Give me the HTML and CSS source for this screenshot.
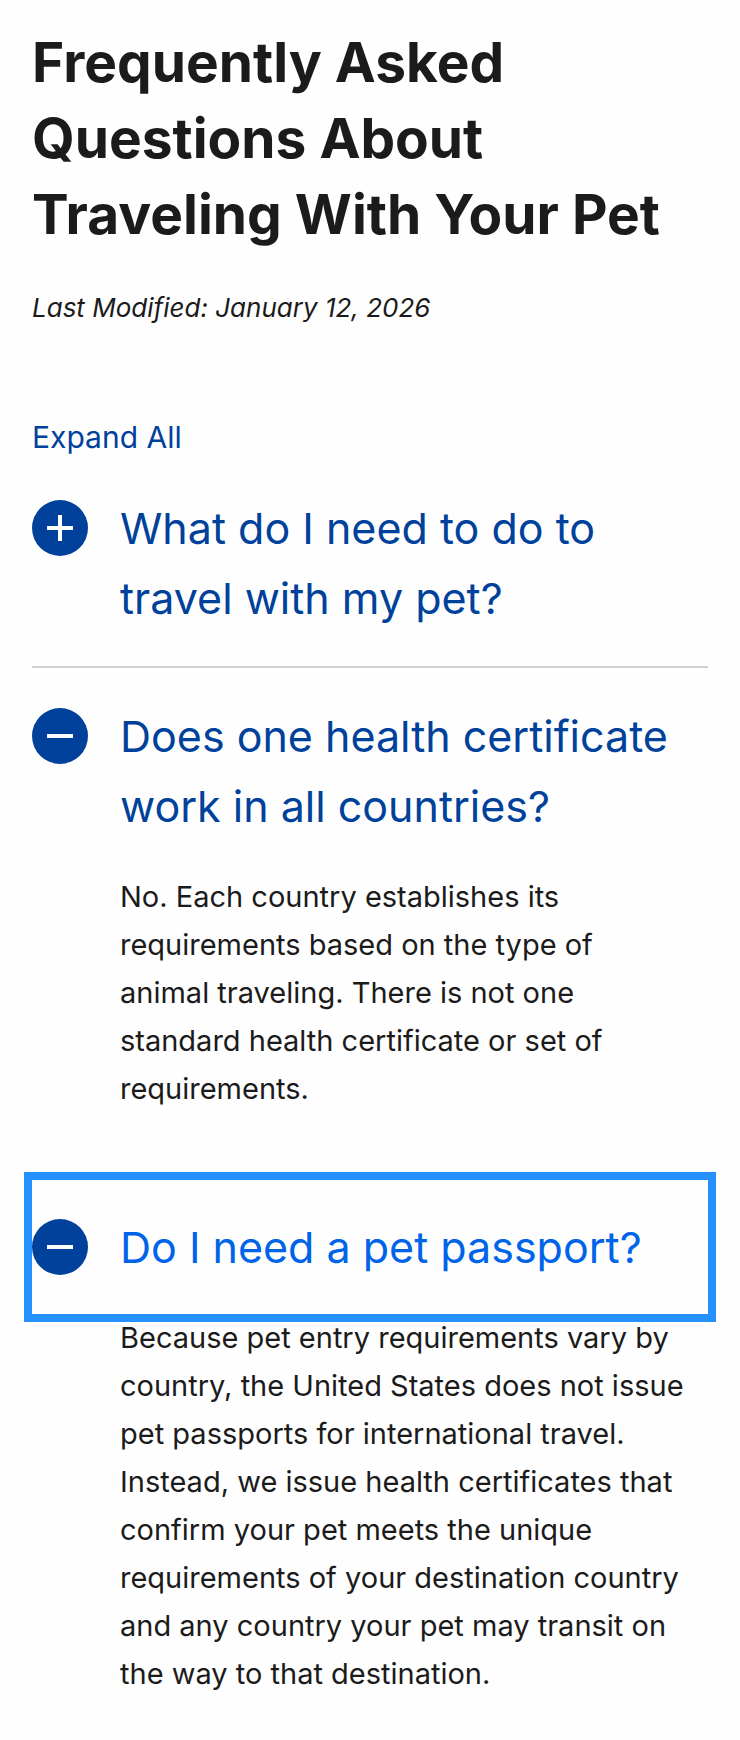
FILE: index.html
```html
<!DOCTYPE html>
<html lang="en">
<head>
    <meta charset="UTF-8">
    <meta name="viewport" content="width=device-width, initial-scale=1.0">
    <title>Frequently Asked Questions About Traveling With Your Pet</title>
    <link rel="stylesheet" href="styles.css">
</head>
<body>
    <main class="page">
        <h1>Frequently Asked Questions About Traveling With Your Pet</h1>
        <p class="modified">Last Modified: January 12, 2026</p>

        <button type="button" class="expand-all" id="expandAll">Expand All</button>

        <section class="faq-item">
            <h2>
                <button type="button" class="faq-toggle" aria-expanded="false" aria-controls="answer-1">
                    <svg class="faq-icon" viewBox="0 0 56 56" aria-hidden="true">
                        <circle cx="28" cy="28" r="28"/>
                        <path d="M15 28h26"/>
                        <path class="bar-v" d="M28 15v26"/>
                    </svg>
                    <span>What do I need to do to travel with my pet?</span>
                </button>
            </h2>
            <div class="faq-answer" id="answer-1" hidden></div>
        </section>

        <section class="faq-item">
            <h2>
                <button type="button" class="faq-toggle" aria-expanded="true" aria-controls="answer-2">
                    <svg class="faq-icon" viewBox="0 0 56 56" aria-hidden="true">
                        <circle cx="28" cy="28" r="28"/>
                        <path d="M15 28h26"/>
                        <path class="bar-v" d="M28 15v26"/>
                    </svg>
                    <span>Does one health certificate work in all countries?</span>
                </button>
            </h2>
            <div class="faq-answer" id="answer-2">
                <p>No. Each country establishes its requirements based on the type of animal traveling. There is not one standard health certificate or set of requirements.</p>
            </div>
        </section>

        <section class="faq-item">
            <h2>
                <button type="button" class="faq-toggle active" aria-expanded="true" aria-controls="answer-3">
                    <svg class="faq-icon" viewBox="0 0 56 56" aria-hidden="true">
                        <circle cx="28" cy="28" r="28"/>
                        <path d="M15 28h26"/>
                        <path class="bar-v" d="M28 15v26"/>
                    </svg>
                    <span>Do I need a pet passport?</span>
                </button>
            </h2>
            <div class="faq-answer" id="answer-3">
                <p>Because pet entry requirements vary by country, the United States does not issue pet passports for international travel. Instead, we issue health certificates that confirm your pet meets the unique requirements of your destination country and any country your pet may transit on the way to that destination.</p>
            </div>
        </section>
    </main>

    <script>
        const toggles = document.querySelectorAll('.faq-toggle');

        function setExpanded(toggle, expanded) {
            toggle.setAttribute('aria-expanded', expanded);
            document.getElementById(toggle.getAttribute('aria-controls')).hidden = !expanded;
        }

        toggles.forEach(toggle => {
            toggle.addEventListener('click', () => {
                toggles.forEach(t => t.classList.remove('active'));
                toggle.classList.add('active');
                setExpanded(toggle, toggle.getAttribute('aria-expanded') !== 'true');
            });
        });

        document.getElementById('expandAll').addEventListener('click', () => {
            toggles.forEach(toggle => setExpanded(toggle, true));
        });
    </script>
</body>
</html>
```
FILE: styles.css
```css
* {
    box-sizing: border-box;
}

body {
    margin: 0;
    background: #fefefe;
    color: #1b1b1b;
    font-family: Inter, "Liberation Sans", sans-serif;
    font-size: 29px;
    line-height: 48px;
}

.page {
    padding: 24px 32px 32px;
}

h1,
h2,
p {
    margin: 0;
}

h1 {
    font-size: 55px;
    font-weight: 700;
    line-height: 76px;
}

.modified {
    margin: 32px 0 81px;
    font-size: 26px;
    font-style: italic;
}

button {
    padding: 0;
    border: none;
    background: none;
    color: #00419b;
    font: inherit;
    text-align: left;
    cursor: pointer;
}

.expand-all {
    display: block;
    font-size: 30px;
}

.faq-item + .faq-item {
    margin-top: 1px;
    padding-top: 1px;
    border-top: 2px solid #d0d0d0;
}

.faq-item:has(.faq-answer:not([hidden])) + .faq-item {
    border-top: none;
}

h2 {
    font-size: 43px;
    font-weight: 400;
    line-height: 70px;
}

.faq-toggle {
    display: flex;
    align-items: flex-start;
    gap: 32px;
    width: 100%;
    padding: 32px 0;
}

.faq-toggle.active {
    outline: 8px solid #2491ff;
    color: #0064e9;
}

.faq-icon {
    flex: none;
    width: 56px;
    height: 56px;
    margin-top: 7px;
    fill: #00419b;
    stroke: #fff;
    stroke-width: 4;
}

.faq-icon circle {
    stroke: none;
}

.faq-toggle[aria-expanded="true"] .bar-v {
    display: none;
}

.faq-answer {
    padding: 0 22px 65px 88px;
}

.faq-item:last-child .faq-answer {
    padding-bottom: 0;
}
```
